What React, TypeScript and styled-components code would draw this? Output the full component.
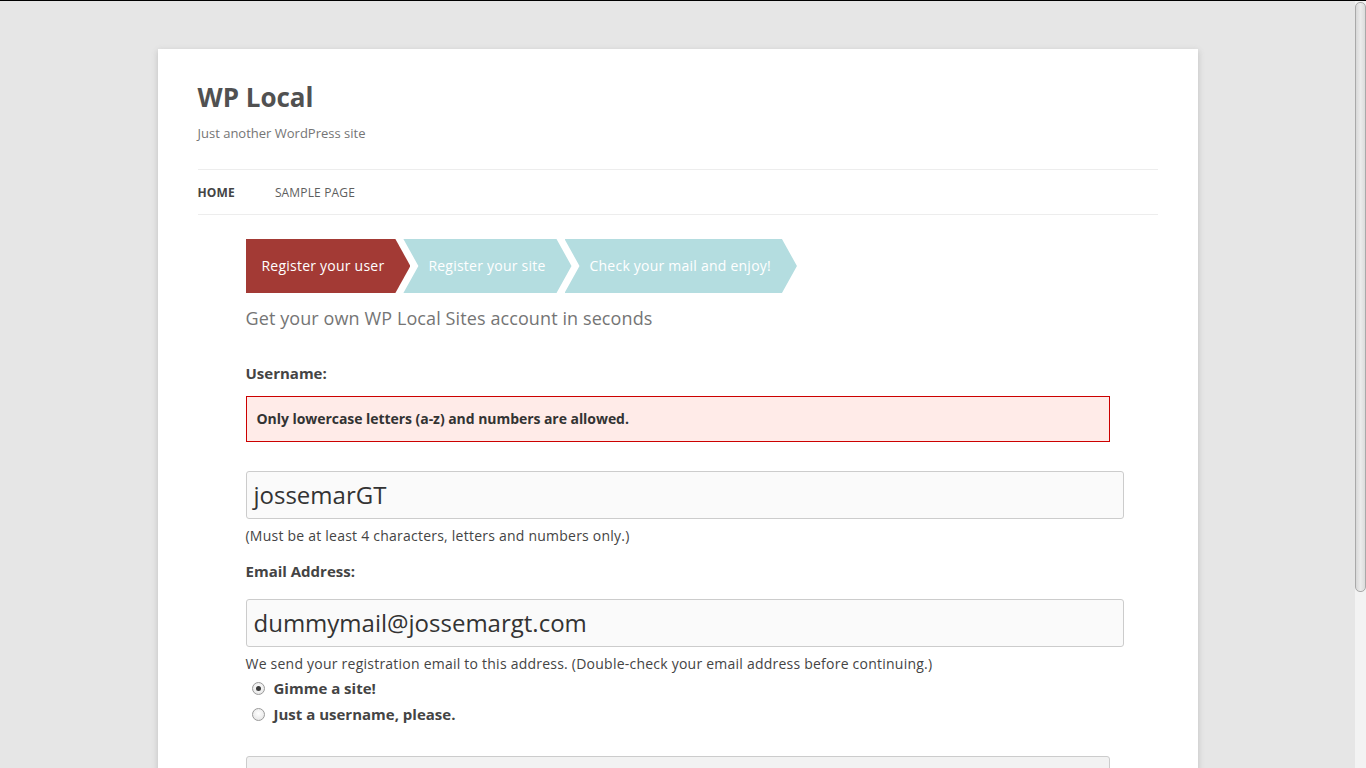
import React from "react";
import styled, { createGlobalStyle } from "styled-components";

const Global = createGlobalStyle`
  html, body { margin: 0; padding: 0; height: 100%; overflow: hidden; }
  body { font-family: "Open Sans", "Liberation Sans", sans-serif; color: #444; background: #e6e6e6; }
  * { box-sizing: border-box; }
`;

const Shell = styled.div`
  display: flex;
  height: 768px;
  border-top: 1px solid #000;
  background: #e6e6e6;
  overflow: hidden;
`;

const Viewport = styled.div`
  flex: 1;
  min-width: 0;
`;

const Scrollbar = styled.div`
  width: 11px;
  background: #f3f3f3;
  display: flex;
  flex-direction: column;
  padding-top: 1px;
`;

const Thumb = styled.div`
  height: 590px;
  border: 1px solid #a9a9a9;
  border-radius: 5px;
  background: linear-gradient(to right, #d8d8d8, #ebebeb 50%, #dcdcdc);
`;

const Card = styled.div`
  width: 1040px;
  margin: 48px auto 0;
  padding: 0 40px;
  background: #fff;
  box-shadow: rgba(100, 100, 100, 0.3) 0 2px 6px;
  height: 800px;
`;

const Header = styled.header`
  padding-top: 30px;
`;

const SiteTitle = styled.h1`
  margin: 0;
  font-size: 26px;
  line-height: 36px;
  font-weight: 700;
  color: #515151;
`;

const Tagline = styled.h2`
  margin: 8px 0 0;
  font-size: 13px;
  line-height: 20px;
  font-weight: 400;
  color: #757575;
`;

const Nav = styled.nav`
  margin-top: 26px;
  border-top: 1px solid #ededed;
  border-bottom: 1px solid #ededed;
  height: 46px;
  display: flex;
  align-items: center;
`;

const NavItem = styled.a<{ $active?: boolean }>`
  font-size: 12px;
  letter-spacing: 0.15px;
  text-transform: uppercase;
  margin-right: 40px;
  color: ${(p) => (p.$active ? "#444" : "#5e5e5e")};
  font-weight: ${(p) => (p.$active ? 700 : 400)};
  text-decoration: none;
`;

const Register = styled.div`
  width: 864px;
  margin: 24px auto 0;
`;

const Steps = styled.div`
  display: flex;
  height: 54px;
`;

const Step = styled.div<{ $first?: boolean; $active?: boolean }>`
  display: flex;
  align-items: center;
  color: #fff;
  font-size: 14px;
  letter-spacing: 0.23px;
  line-height: 20px;
  padding-bottom: 1px;
  white-space: nowrap;
  background: ${(p) => (p.$active ? "#a33a35" : "#b4dde0")};
  padding-left: ${(p) => (p.$first ? "16px" : "25px")};
  padding-right: 26px;
  margin-left: ${(p) => (p.$first ? "0" : "-7px")};
  clip-path: ${(p) =>
    p.$first
      ? "polygon(0 0, calc(100% - 15px) 0, 100% 50%, calc(100% - 15px) 100%, 0 100%)"
      : "polygon(0 0, calc(100% - 15px) 0, 100% 50%, calc(100% - 15px) 100%, 0 100%, 15px 50%)"};
`;

const Lead = styled.h2`
  margin: 12px 0 0;
  font-size: 18px;
  letter-spacing: 0.1px;
  line-height: 26px;
  font-weight: 400;
  color: #757575;
`;

const Label = styled.label<{ $gap: number }>`
  display: block;
  margin-top: ${(p) => p.$gap}px;
  padding-bottom: 1px;
  font-size: 15px;
  line-height: 20px;
  font-weight: 700;
  color: #444;
`;

const ErrorBox = styled.p`
  margin: 12px 0 0;
  height: 46px;
  display: flex;
  align-items: center;
  padding: 0 10px 1px;
  background: #ffebe8;
  border: 1px solid #c00;
  font-size: 14px;
  letter-spacing: -0.05px;
  font-weight: 700;
  color: #333;
`;

const Input = styled.div<{ $gap: number }>`
  width: 878px;
  height: 48px;
  margin-top: ${(p) => p.$gap}px;
  padding: 0 7px 2px;
  display: flex;
  align-items: center;
  background: #fafafa;
  border: 1px solid #ccc;
  border-radius: 3px;
  font-size: 24px;
  color: #333;
`;

const Hint = styled.p<{ $gap: number }>`
  margin: ${(p) => p.$gap}px 0 0;
  font-size: 14px;
  letter-spacing: 0.23px;
  line-height: 20px;
  color: #444;
`;

const RadioRow = styled.label<{ $gap: number }>`
  display: flex;
  align-items: center;
  margin-top: ${(p) => p.$gap}px;
  height: 20px;
  font-size: 15px;
  font-weight: 700;
  color: #444;
`;

const Radio = styled.span<{ $checked?: boolean }>`
  width: 13px;
  height: 13px;
  margin: 0 9px 0 6px;
  border-radius: 50%;
  border: 1px solid #9a9a9a;
  background: radial-gradient(circle at 50% 40%, #ffffff, #e0e0e0);
  display: flex;
  align-items: center;
  justify-content: center;
  &::after {
    content: "";
    width: 5px;
    height: 5px;
    border-radius: 50%;
    background: ${(p) => (p.$checked ? "#3a3a3a" : "transparent")};
  }
`;

const NextBox = styled.div`
  margin-top: 32px;
  width: 864px;
  height: 60px;
  background: #f2f2f2;
  border: 1px solid #ccc;
  border-radius: 3px;
`;

export default function App() {
  return (
    <>
      <Global />
      <Shell>
        <Viewport>
          <Card>
            <Header>
              <SiteTitle>WP Local</SiteTitle>
              <Tagline>Just another WordPress site</Tagline>
              <Nav>
                <NavItem $active href="#">Home</NavItem>
                <NavItem href="#">Sample Page</NavItem>
              </Nav>
            </Header>
            <Register>
              <Steps>
                <Step $first $active>Register your user</Step>
                <Step>Register your site</Step>
                <Step>Check your mail and enjoy!</Step>
              </Steps>
              <Lead>Get your own WP Local Sites account in seconds</Lead>
              <Label $gap={32}>Username:</Label>
              <ErrorBox>Only lowercase letters (a-z) and numbers are allowed.</ErrorBox>
              <Input $gap={29}>jossemarGT</Input>
              <Hint $gap={7}>(Must be at least 4 characters, letters and numbers only.)</Hint>
              <Label $gap={15}>Email Address:</Label>
              <Input $gap={17}>dummymail@jossemargt.com</Input>
              <Hint $gap={7}>
                We send your registration email to this address. (Double-check your email address before continuing.)
              </Hint>
              <RadioRow $gap={4}>
                <Radio $checked />
                Gimme a site!
              </RadioRow>
              <RadioRow $gap={6}>
                <Radio />
                Just a username, please.
              </RadioRow>
              <NextBox />
            </Register>
          </Card>
        </Viewport>
        <Scrollbar>
          <Thumb />
        </Scrollbar>
      </Shell>
    </>
  );
}
